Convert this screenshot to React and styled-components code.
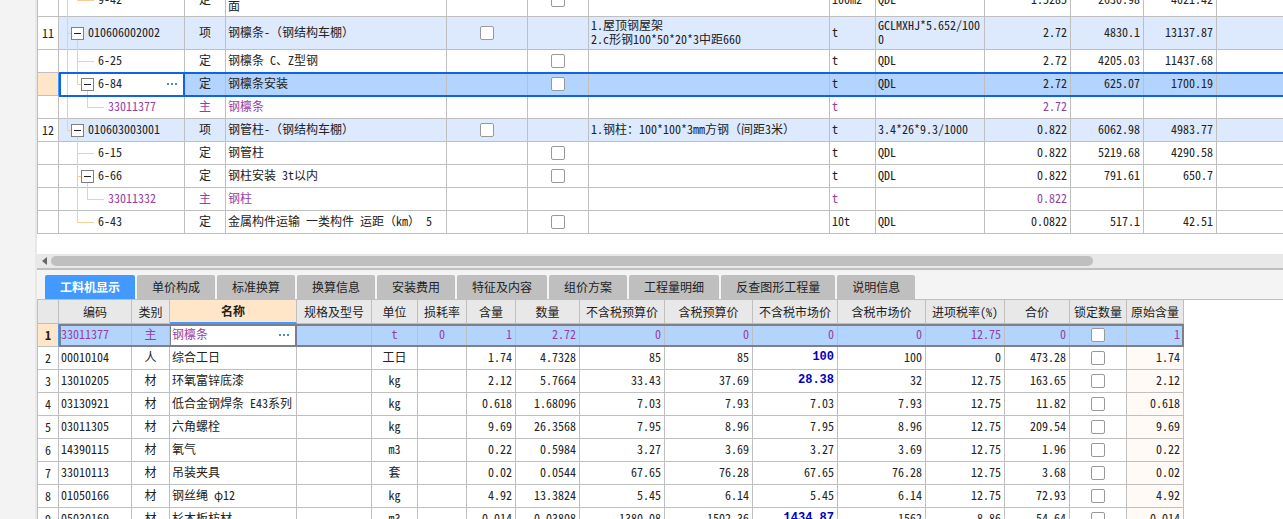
import React from "react";
import styled, { createGlobalStyle, css } from "styled-components";

const c = {
  grid: "#bfbfbf",
  head: "#e8e8e8",
  shell: "#f4f4f4",
  project: "#dde9fd",
  selected: "#b3d4ff",
  focus: "#1062e6",
  accent: "#4299ff",
  cream: "#ffe6c8",
  tint: "#fffaf6",
  text: "#222",
  material: "#963fa3",
  price: "#0000c0",
  tree: "#f3cf9a",
};

const Global = createGlobalStyle`
  * { box-sizing: border-box; }
  body {
    margin: 0;
    background: #fff;
    color: ${c.text};
    font: 12px/14px "Noto Sans Mono CJK SC", "Noto Sans CJK SC", monospace;
  }
  button, input { font: inherit; color: inherit; margin: 0; }
`;

const Page = styled.div`
  display: flex;
  height: 100vh;
  overflow: hidden;
`;

const Gutter = styled.aside`
  flex: 0 0 37px;
  background: #f3f3f3;
  border-right: 2px solid #e8e8e8;
`;

const Main = styled.main`
  flex: 1;
  min-width: 0;
  display: flex;
  flex-direction: column;
`;

const UpperPane = styled.section`
  flex: 0 0 254px;
  display: flex;
  flex-direction: column;
  justify-content: flex-end;
  padding-bottom: 20px;
  overflow: hidden;
`;

const LowerPane = styled.section`
  flex: 1;
  min-height: 0;
  overflow: hidden;
`;

const Grid = styled.table`
  table-layout: fixed;
  width: ${(p) => (p.$fill ? "100%" : "min-content")};
  border-collapse: separate;
  border-spacing: 0;
  border-left: 1px solid ${c.grid};
`;

const Col = styled.col`
  width: ${(p) => (p.$w ? `${p.$w}px` : "auto")};
`;

const Row = styled.tr`
  position: relative;
  height: ${(p) => (p.$tall ? 33 : 23)}px;
  background: ${(p) => (p.$selected ? c.selected : p.$project ? c.project : "#fff")};
  color: ${(p) => (p.$material ? c.material : c.text)};
  ${(p) =>
    p.$selected &&
    css`
      & > td:last-child::after {
        content: "";
        position: absolute;
        inset: ${p.$inner ? "0 0 0 21px" : "-1px 0 -1px 21px"};
        border: 2px solid ${p.$inner ? "#7d8087" : c.focus};
        border-right-width: ${p.$inner ? "2px" : 0};
        pointer-events: none;
        z-index: 1;
      }
    `}
`;

const Cell = styled.td`
  padding: ${(p) => (p.$align === "right" ? "0 3px 2px 2px" : "0 2px 2px")};
  border-right: 1px solid ${c.grid};
  border-bottom: 1px solid ${c.grid};
  text-align: ${(p) => p.$align || "left"};
  white-space: ${(p) => (p.$wrap ? "pre-line" : "nowrap")};
  word-break: break-all;
  overflow: hidden;
  ${(p) => p.$strong && `color: ${c.price}; font-family: "Liberation Mono", monospace; font-weight: 700;`}
  ${(p) => p.$tint && `background: ${c.tint};`}
`;

const BoxCell = styled(Cell)`
  padding: 0;
`;

const FillCell = styled(Cell)`
  border-right: 0;
`;

const TreeCell = styled(Cell)`
  padding: 0 2px;
  overflow: visible;
`;

const NumberCell = styled.th`
  padding: 0;
  font-weight: ${(p) => (p.$bold ? 700 : 400)};
  color: ${c.text};
  background: ${(p) => (p.$active ? c.cream : "#fff")};
  border-right: 1px solid ${(p) => (p.$active ? c.accent : c.grid)};
  border-bottom: 1px solid ${c.grid};
`;

const EditCell = styled(Cell)`
  padding: 0 0 0 2px;
  overflow: visible;
  background: #fff;
  border-right: 2px solid ${(p) => (p.$inner ? "#7d8087" : c.focus)};
  ${(p) => p.$inner && "border-left: 1px solid #7d8087; padding-left: 1px;"}
`;

const EditBody = styled.div`
  display: flex;
  align-items: center;
  justify-content: space-between;
`;

const MoreButton = styled.button`
  display: flex;
  padding: 4px 6px;
  border: 0;
  background: none;
  color: #4a8fc4;
`;

const Check = styled.input`
  appearance: none;
  display: block;
  width: 14px;
  height: 14px;
  margin: 0 auto;
  border: 1px solid #999;
  border-radius: 2px;
  background: #fff;
`;

const HeadCell = styled.th`
  height: 24px;
  padding: 0;
  font-weight: ${(p) => (p.$active ? 700 : 400)};
  background: ${(p) => (p.$active ? c.cream : c.head)};
  border-right: 1px solid ${c.grid};
  border-bottom: ${(p) => (p.$active ? `2px solid ${c.accent}` : `1px solid ${c.grid}`)};
  white-space: nowrap;
`;

const Tree = styled.div`
  display: flex;
  align-items: center;
  height: ${(p) => (p.$tall ? 33 : 23)}px;
  margin-bottom: -1px;
  padding-left: 1px;
`;

const Label = styled.span`
  padding-bottom: 3px;
`;

const vertical = {
  none: "0 0",
  line: "1px 100%",
  tee: "1px 100%",
  elbow: "1px 50%",
};

const Guide = styled.span`
  align-self: stretch;
  width: 10px;
  background-image: linear-gradient(${c.tree}, ${c.tree}), linear-gradient(${c.tree}, ${c.tree});
  background-repeat: no-repeat;
  background-position: 5px 0, 5px 50%;
  background-size: ${(p) => vertical[p.$kind]},
    ${(p) => (p.$kind === "tee" || p.$kind === "elbow" ? "5px 1px" : "0 0")};
`;

const Stub = styled.span`
  width: 12px;
  height: 1px;
  margin-right: 4px;
  background: ${c.tree};
`;

const Knot = styled.span`
  align-self: stretch;
  display: flex;
  align-items: center;
  margin: 0 4px 0 -1px;
  background: linear-gradient(${c.tree}, ${c.tree}) 6px 100% / 1px 50% no-repeat;
`;

const Toggle = styled.button`
  display: grid;
  place-items: center;
  width: 13px;
  height: 13px;
  padding: 0;
  border: 1px solid #808080;
  background: #fff;
`;

const ScrollBar = styled.div`
  flex: 0 0 14px;
  display: flex;
  align-items: center;
  gap: 4px;
  padding-left: 5px;
  background: #e8e8e8;
`;

const Thumb = styled.div`
  flex: 0 0 84%;
  height: 10px;
  border-radius: 5px;
  background: ${c.grid};
`;

const Tabs = styled.div`
  flex: 0 0 32px;
  display: flex;
  align-items: flex-end;
  gap: 2px;
  padding-left: 8px;
  background: ${c.shell};
  border-top: 2px solid ${c.grid};
  border-bottom: 1px solid ${c.grid};
`;

const Tab = styled.button`
  height: 24px;
  padding: 0 15px;
  border: 0;
  border-radius: 2px 2px 0 0;
  font-family: "Noto Sans CJK SC", sans-serif;
  font-weight: ${(p) => (p.$active ? 700 : 400)};
  background: ${(p) => (p.$active ? c.accent : c.grid)};
  color: ${(p) => (p.$active ? "#fff" : "#222")};
`;

const More = () => (
  <MoreButton aria-label="更多">
    <svg width="10" height="2" fill="currentColor" aria-hidden="true">
      <rect width="2" height="2" />
      <rect x="4" width="2" height="2" />
      <rect x="8" width="2" height="2" />
    </svg>
  </MoreButton>
);

const CodeTree = ({ row }) => (
  <Tree $tall={row.tall}>
    {row.guides.map((kind, i) => (
      <Guide key={i} $kind={kind} />
    ))}
    {row.open ? (
      <Knot>
        <Toggle aria-label="折叠">
          <svg width="7" height="1" aria-hidden="true">
            <rect width="7" height="1" fill="#222" />
          </svg>
        </Toggle>
      </Knot>
    ) : (
      <Stub />
    )}
    <Label>{row.code}</Label>
  </Tree>
);

const upperCols = [21, 126, 41, 221, 81, 61, 241, 46, 109, 86, 73, 73, null];

const upperRows = [
  { guides: ["line", "elbow"], tall: true, code: "9-42", kind: "定", name: "金属面油漆 其他金属\n面", check: 2, unit: "100m2", expr: "QDL", qty: "1.5285", price: "2630.98", total: "4021.42" },
  { no: "11", guides: ["tee"], open: true, tall: true, project: true, code: "010606002002", kind: "项", name: "钢檩条-（钢结构车棚）", check: 1, spec: "1.屋顶钢屋架\n2.c形钢100*50*20*3中距660", unit: "t", expr: "GCLMXHJ*5.652/1000", qty: "2.72", price: "4830.1", total: "13137.87" },
  { guides: ["line", "tee"], code: "6-25", kind: "定", name: "钢檩条 C、Z型钢", check: 2, unit: "t", expr: "QDL", qty: "2.72", price: "4205.03", total: "11437.68" },
  { guides: ["line", "elbow"], open: true, selected: true, code: "6-84", kind: "定", name: "钢檩条安装", check: 2, unit: "t", expr: "QDL", qty: "2.72", price: "625.07", total: "1700.19" },
  { guides: ["line", "none", "elbow"], material: true, code: "33011377", kind: "主", name: "钢檩条", unit: "t", qty: "2.72" },
  { no: "12", guides: ["elbow"], open: true, project: true, code: "010603003001", kind: "项", name: "钢管柱-（钢结构车棚）", check: 1, spec: "1.钢柱：100*100*3mm方钢（间距3米）", unit: "t", expr: "3.4*26*9.3/1000", qty: "0.822", price: "6062.98", total: "4983.77" },
  { guides: ["none", "tee"], code: "6-15", kind: "定", name: "钢管柱", check: 2, unit: "t", expr: "QDL", qty: "0.822", price: "5219.68", total: "4290.58" },
  { guides: ["none", "tee"], open: true, code: "6-66", kind: "定", name: "钢柱安装 3t以内", check: 2, unit: "t", expr: "QDL", qty: "0.822", price: "791.61", total: "650.7" },
  { guides: ["none", "line", "elbow"], material: true, code: "33011332", kind: "主", name: "钢柱", unit: "t", qty: "0.822" },
  { guides: ["none", "elbow"], code: "6-43", kind: "定", name: "金属构件运输 一类构件 运距（km） 5", check: 2, unit: "10t", expr: "QDL", qty: "0.0822", price: "517.1", total: "42.51" },
];

const UpperRow = ({ row }) => (
  <Row $tall={row.tall} $project={row.project} $selected={row.selected} $material={row.material}>
    <NumberCell scope="row" $active={row.selected}>{row.no}</NumberCell>
    {row.selected ? (
      <EditCell>
        <EditBody>
          <CodeTree row={row} />
          <More />
        </EditBody>
      </EditCell>
    ) : (
      <TreeCell>
        <CodeTree row={row} />
      </TreeCell>
    )}
    <Cell $align="center">{row.kind}</Cell>
    <Cell $wrap>{row.name}</Cell>
    <BoxCell>{row.check === 1 && <Check type="checkbox" aria-label={`${row.code} 主要清单`} />}</BoxCell>
    <BoxCell>{row.check === 2 && <Check type="checkbox" aria-label={`${row.code} 锁定`} />}</BoxCell>
    <Cell $wrap>{row.spec}</Cell>
    <Cell>{row.unit}</Cell>
    <Cell $wrap>{row.expr}</Cell>
    <Cell $align="right">{row.qty}</Cell>
    <Cell $align="right">{row.price}</Cell>
    <Cell $align="right">{row.total}</Cell>
    <FillCell />
  </Row>
);

const tabs = ["工料机显示", "单价构成", "标准换算", "换算信息", "安装费用", "特征及内容", "组价方案", "工程量明细", "反查图形工程量", "说明信息"];

const lowerCols = [21, 73, 38, 127, 75, 46, 49, 49, 64, 85, 88, 85, 88, 79, 65, 57, 57];
const lowerHeads = ["", "编码", "类别", "名称", "规格及型号", "单位", "损耗率", "含量", "数量", "不含税预算价", "含税预算价", "不含税市场价", "含税市场价", "进项税率(%)", "合价", "锁定数量", "原始含量"];

const lowerRows = [
  ["33011377", "主", "钢檩条", "t", "0", "1", "2.72", "0", "0", "0", "0", "12.75", "0", "1"],
  ["00010104", "人", "综合工日", "工日", "", "1.74", "4.7328", "85", "85", "100", "100", "0", "473.28", "1.74"],
  ["13010205", "材", "环氧富锌底漆", "kg", "", "2.12", "5.7664", "33.43", "37.69", "28.38", "32", "12.75", "163.65", "2.12"],
  ["03130921", "材", "低合金钢焊条 E43系列", "kg", "", "0.618", "1.68096", "7.03", "7.93", "7.03", "7.93", "12.75", "11.82", "0.618"],
  ["03011305", "材", "六角螺栓", "kg", "", "9.69", "26.3568", "7.95", "8.96", "7.95", "8.96", "12.75", "209.54", "9.69"],
  ["14390115", "材", "氧气", "m3", "", "0.22", "0.5984", "3.27", "3.69", "3.27", "3.69", "12.75", "1.96", "0.22"],
  ["33010113", "材", "吊装夹具", "套", "", "0.02", "0.0544", "67.65", "76.28", "67.65", "76.28", "12.75", "3.68", "0.02"],
  ["01050166", "材", "钢丝绳 φ12", "kg", "", "4.92", "13.3824", "5.45", "6.14", "5.45", "6.14", "12.75", "72.93", "4.92"],
  ["05030169", "材", "杉木板枋材", "m3", "", "0.014", "0.03808", "1380.08", "1502.36", "1434.87", "1562", "8.86", "54.64", "0.014"],
];

const LowerRow = ({ row, index }) => {
  const [code, kind, name, unit, loss, content, qty, ...rest] = row;
  const [budget, budgetTax, market, marketTax, rate, total, original] = rest;
  const active = index === 0;
  return (
    <Row $selected={active} $inner $material={active}>
      <NumberCell scope="row" $active={active} $bold={active}>{index + 1}</NumberCell>
      <Cell>{code}</Cell>
      <Cell $align="center">{kind}</Cell>
      {active ? (
        <EditCell $inner>
          <EditBody>
            <Label>{name}</Label>
            <More />
          </EditBody>
        </EditCell>
      ) : (
        <Cell>{name}</Cell>
      )}
      <Cell />
      <Cell $align="center">{unit}</Cell>
      <Cell $align="center">{loss}</Cell>
      <Cell $align="right">{content}</Cell>
      <Cell $align="right">{qty}</Cell>
      <Cell $align="right">{budget}</Cell>
      <Cell $align="right">{budgetTax}</Cell>
      <Cell $align="right" $strong={market !== budget}>{market}</Cell>
      <Cell $align="right">{marketTax}</Cell>
      <Cell $align="right">{rate}</Cell>
      <Cell $align="right">{total}</Cell>
      <BoxCell><Check type="checkbox" aria-label={`${code} 锁定数量`} /></BoxCell>
      <Cell $align="right" $tint={!active}>{original}</Cell>
    </Row>
  );
};

export default function App() {
  return (
    <>
      <Global />
      <Page>
        <Gutter />
        <Main>
          <UpperPane>
            <Grid $fill>
              <colgroup>
                {upperCols.map((w, i) => <Col key={i} $w={w} />)}
              </colgroup>
              <tbody>
                {upperRows.map((row) => <UpperRow key={row.code} row={row} />)}
              </tbody>
            </Grid>
          </UpperPane>
          <ScrollBar>
            <svg width="5" height="8" aria-hidden="true">
              <path d="M5 0v8L0 4z" fill="#666" />
            </svg>
            <Thumb />
          </ScrollBar>
          <Tabs role="tablist">
            {tabs.map((tab, i) => (
              <Tab key={tab} role="tab" aria-selected={i === 0} $active={i === 0}>{tab}</Tab>
            ))}
          </Tabs>
          <LowerPane>
            <Grid>
              <colgroup>
                {lowerCols.map((w, i) => <Col key={i} $w={w} />)}
              </colgroup>
              <thead>
                <tr>
                  {lowerHeads.map((head) => (
                    <HeadCell key={head} scope="col" $active={head === "名称"}>{head}</HeadCell>
                  ))}
                </tr>
              </thead>
              <tbody>
                {lowerRows.map((row, i) => <LowerRow key={row[0]} row={row} index={i} />)}
              </tbody>
            </Grid>
          </LowerPane>
        </Main>
      </Page>
    </>
  );
}
